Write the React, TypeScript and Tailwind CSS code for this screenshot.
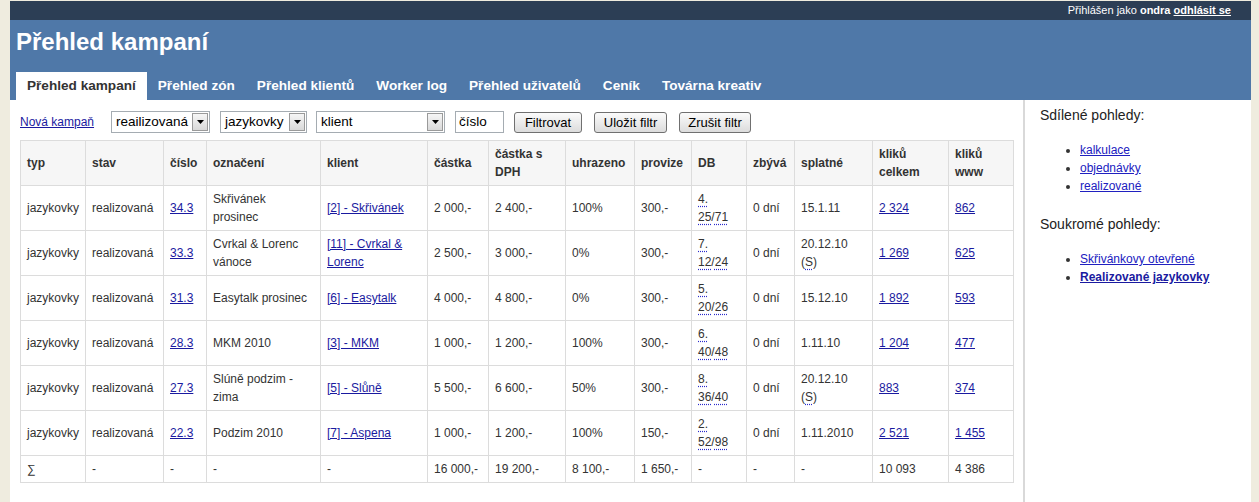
import React from "react";

type Row = {
  cislo: string;
  oznaceni: string[];
  klient: string[];
  castka: string;
  dph: string;
  uhr: string;
  prov: string;
  db: [string, string, string];
  splatne: string;
  s: boolean;
  kc: string;
  kw: string;
};

const nb = (t: string) => t.replace(/ /g, "\u00a0");

const rows: Row[] = [
  { cislo: "34.3", oznaceni: ["Skřivánek", "prosinec"], klient: ["[2] - Skřivánek"], castka: "2 000,-", dph: "2 400,-", uhr: "100%", prov: "300,-", db: ["4", "25", "71"], splatne: "15.1.11", s: false, kc: "2 324", kw: "862" },
  { cislo: "33.3", oznaceni: ["Cvrkal & Lorenc", "vánoce"], klient: ["[11] - Cvrkal &", "Lorenc"], castka: "2 500,-", dph: "3 000,-", uhr: "0%", prov: "300,-", db: ["7", "12", "24"], splatne: "20.12.10", s: true, kc: "1 269", kw: "625" },
  { cislo: "31.3", oznaceni: ["Easytalk prosinec"], klient: ["[6] - Easytalk"], castka: "4 000,-", dph: "4 800,-", uhr: "0%", prov: "300,-", db: ["5", "20", "26"], splatne: "15.12.10", s: false, kc: "1 892", kw: "593" },
  { cislo: "28.3", oznaceni: ["MKM 2010"], klient: ["[3] - MKM"], castka: "1 000,-", dph: "1 200,-", uhr: "100%", prov: "300,-", db: ["6", "40", "48"], splatne: "1.11.10", s: false, kc: "1 204", kw: "477" },
  { cislo: "27.3", oznaceni: ["Slúně podzim -", "zima"], klient: ["[5] - Slůně"], castka: "5 500,-", dph: "6 600,-", uhr: "50%", prov: "300,-", db: ["8", "36", "40"], splatne: "20.12.10", s: true, kc: "883", kw: "374" },
  { cislo: "22.3", oznaceni: ["Podzim 2010"], klient: ["[7] - Aspena"], castka: "1 000,-", dph: "1 200,-", uhr: "100%", prov: "150,-", db: ["2", "52", "98"], splatne: "1.11.2010", s: false, kc: "2 521", kw: "1 455" },
];

const widths = [65, 78, 43, 114, 107, 61, 77, 69, 57, 55, 48, 78, 76, 65];

const headers: string[][] = [
  ["typ"], ["stav"], ["číslo"], ["označení"], ["klient"], ["částka"], ["částka s", "DPH"], ["uhrazeno"], ["provize"], ["DB"], ["zbývá"], ["splatné"], ["kliků", "celkem"], ["kliků", "www"],
];

const sum = ["∑", "-", "-", "-", "-", "16 000,-", "19 200,-", "8 100,-", "1 650,-", "-", "-", "-", "10 093", "4 386"];

const Lines = ({ lines }: { lines: string[] }) => (
  <>
    {lines.map((l, i) => (
      <React.Fragment key={i}>
        {i > 0 && <br />}
        {l}
      </React.Fragment>
    ))}
  </>
);

const Abbr = ({ children }: { children: React.ReactNode }) => (
  <span className="underline decoration-dotted decoration-[#2a2acc] underline-offset-[3px]">{children}</span>
);

const L = ({ children, bold }: { children: React.ReactNode; bold?: boolean }) => (
  <a href="#" className={"text-[#1a1aa0] underline" + (bold ? " font-bold" : "")}>{children}</a>
);

const FakeSelect = ({ label, w }: { label: string; w: string }) => (
  <div className={`${w} h-[22px] border border-[#a5acb2] bg-white flex items-center justify-between pl-[4px] pr-[1px] text-[13.5px] text-black leading-none`}>
    <span>{label}</span>
    <span className="w-[16px] h-[18px] border border-[#9a9a9a] bg-gradient-to-b from-[#f6f6f6] to-[#d9d9d9] flex items-center justify-center">
      <svg width="7" height="4" viewBox="0 0 7 4"><polygon points="0,0 7,0 3.5,4" fill="#000" /></svg>
    </span>
  </div>
);

const Btn = ({ label, w }: { label: string; w: string }) => (
  <button className={`${w} h-[21px] border border-[#707070] rounded-[3px] bg-gradient-to-b from-[#fbfbfb] to-[#dcdcdc] text-[13px] text-black leading-none flex items-center justify-center`}>
    {label}
  </button>
);

const td = "border border-[#dcdcdc] px-[6px] py-[4px] align-middle text-left font-normal";

export default function App() {
  return (
    <div className="min-h-screen bg-[#efecdf] font-['Liberation_Sans',Arial,sans-serif] text-[#333]">
      <div className="ml-[10px] w-[1241px] pt-px">
        {/* top bar */}
        <div className="h-[19px] bg-[#2c3e55] flex items-center justify-end pr-[20px] text-[11px] text-white">
          <span>Přihlášen jako&nbsp;</span>
          <b>ondra</b>
          <span>&nbsp;</span>
          <a href="#" className="font-bold underline text-white">odhlásit se</a>
        </div>
        {/* header */}
        <div className="bg-[#4f78a8] h-[80px] flex flex-col px-[6px]">
          <h1 className="mt-[8px] h-[28px] leading-[28px] text-[24px] font-bold text-white">Přehled kampaní</h1>
          <div className="mt-[16px] h-[28px] flex">
            {["Přehled kampaní", "Přehled zón", "Přehled klientů", "Worker log", "Přehled uživatelů", "Ceník", "Továrna kreativ"].map((t, i) => (
              <a
                key={t}
                href="#"
                className={
                  "h-[28px] px-[11px] flex items-center text-[13.6px] font-bold " +
                  (i === 0 ? "bg-white text-[#333]" : "text-white")
                }
              >
                {t}
              </a>
            ))}
          </div>
        </div>
        {/* body */}
        <div className="flex bg-white min-h-[402px]">
          <div className="w-[1013px] pl-[10px] pt-[11px]">
            <div className="flex items-center h-[22px]">
              <a href="#" className="text-[12px] text-[#1a1aa0] underline w-[91px]">Nová kampaň</a>
              <FakeSelect label="reailizovaná" w="w-[99px]" />
              <div className="w-[10px]" />
              <FakeSelect label="jazykovky" w="w-[87px]" />
              <div className="w-[9px]" />
              <FakeSelect label="klient" w="w-[129px]" />
              <div className="w-[10px]" />
              <div className="w-[49px] h-[22px] border border-[#a5acb2] bg-white flex items-center pl-[3px] text-[13.5px] text-black leading-none">číslo</div>
              <div className="w-[10px]" />
              <Btn label="Filtrovat" w="w-[68px]" />
              <div className="w-[12px]" />
              <Btn label="Uložit filtr" w="w-[73px]" />
              <div className="w-[12px]" />
              <Btn label="Zrušit filtr" w="w-[72px]" />
            </div>
            <table className="mt-[7px] w-[993px] table-fixed border-collapse text-[12px] leading-[18px]">
              <colgroup>
                {widths.map((w, i) => (
                  <col key={i} style={{ width: w }} />
                ))}
              </colgroup>
              <thead>
                <tr className="bg-[#f6f6f6] h-[44px]">
                  {headers.map((h, i) => (
                    <th key={i} className={td + " font-bold text-[#333]"}>
                      <span className="font-bold"><Lines lines={h} /></span>
                    </th>
                  ))}
                </tr>
              </thead>
              <tbody>
                {rows.map((r) => (
                  <tr key={r.cislo} className="h-[45px]">
                    <td className={td}>jazykovky</td>
                    <td className={td}>realizovaná</td>
                    <td className={td}><L>{r.cislo}</L></td>
                    <td className={td}><Lines lines={r.oznaceni} /></td>
                    <td className={td}>
                      <L><Lines lines={r.klient} /></L>
                    </td>
                    <td className={td}>{nb(r.castka)}</td>
                    <td className={td}>{nb(r.dph)}</td>
                    <td className={td}>{r.uhr}</td>
                    <td className={td}>{r.prov}</td>
                    <td className={td}>
                      <Abbr>{r.db[0]}.</Abbr>
                      <br />
                      <Abbr>{r.db[1]}</Abbr>/<Abbr>{r.db[2]}</Abbr>
                    </td>
                    <td className={td}>0&nbsp;dní</td>
                    <td className={td}>
                      {r.splatne}
                      {r.s && (
                        <>
                          <br />(<Abbr>S</Abbr>)
                        </>
                      )}
                    </td>
                    <td className={td}><L>{nb(r.kc)}</L></td>
                    <td className={td}><L>{nb(r.kw)}</L></td>
                  </tr>
                ))}
                <tr className="h-[27px]">
                  {sum.map((s, i) => (
                    <td key={i} className={td}>{nb(s)}</td>
                  ))}
                </tr>
              </tbody>
            </table>
          </div>
          <div className="w-[2px] bg-[#d9d9d9]" />
          <div className="flex-1 pl-[15px] pt-[7px] text-[#222]">
            <div className="text-[14px] leading-[16px]">Sdílené pohledy:</div>
            <ul className="mt-[18px] list-disc pl-[40px] text-[12px] leading-[18px] marker:text-[#333]">
              <li><a href="#" className="text-[#2020c0] underline">kalkulace</a></li>
              <li><a href="#" className="text-[#2020c0] underline">objednávky</a></li>
              <li><a href="#" className="text-[#2020c0] underline">realizované</a></li>
            </ul>
            <div className="mt-[21px] text-[14px] leading-[16px]">Soukromé pohledy:</div>
            <ul className="mt-[18px] list-disc pl-[40px] text-[12px] leading-[18px] marker:text-[#333]">
              <li><a href="#" className="text-[#2020c0] underline">Skřivánkovy otevřené</a></li>
              <li><a href="#" className="text-[#1a1aa0] underline font-bold">Realizované jazykovky</a></li>
            </ul>
          </div>
        </div>
      </div>
    </div>
  );
}
